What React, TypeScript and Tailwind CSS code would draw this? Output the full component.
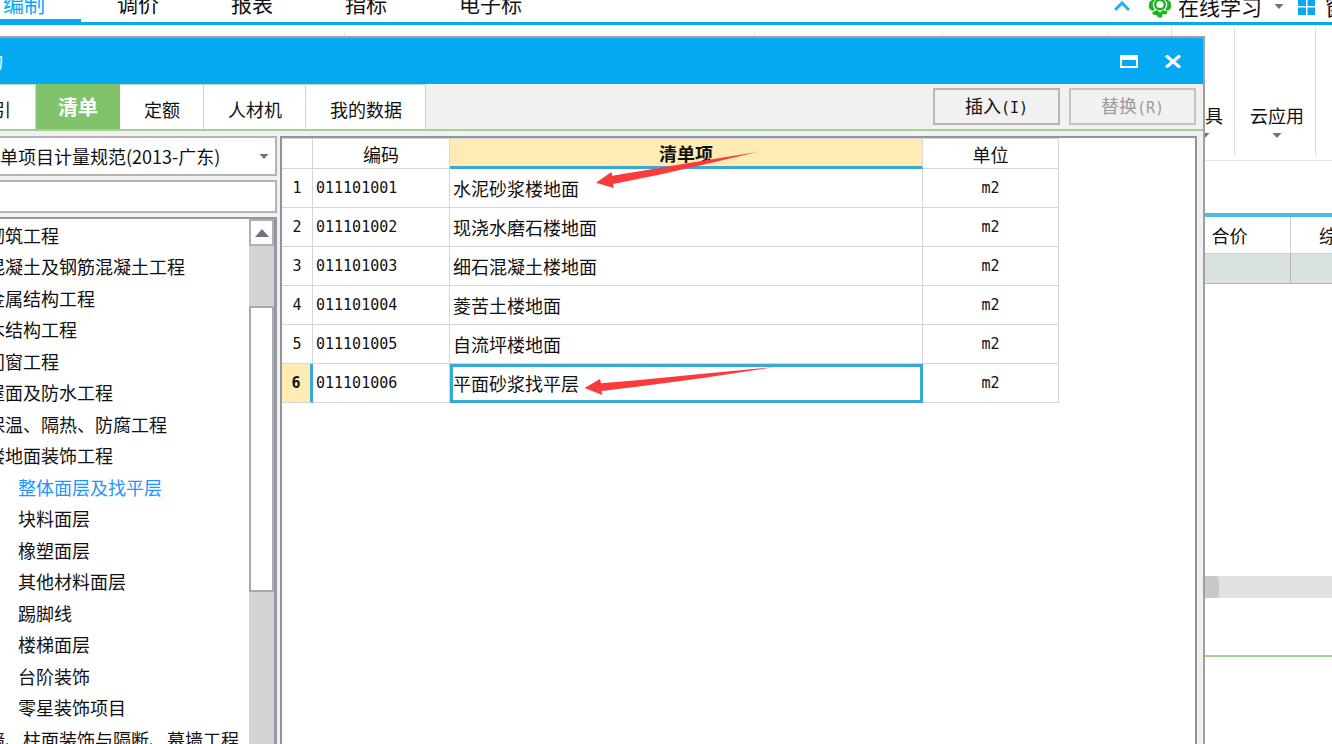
import React from "react";

const menuTabs = ["编制", "调价", "报表", "指标", "电子标"];

const libraryTabs = ["索引", "清单", "定额", "人材机", "我的数据"];

const chapters = [
  { name: "砌筑工程" },
  { name: "混凝土及钢筋混凝土工程" },
  { name: "金属结构工程" },
  { name: "木结构工程" },
  { name: "门窗工程" },
  { name: "屋面及防水工程" },
  { name: "保温、隔热、防腐工程" },
  { name: "楼地面装饰工程" },
  { name: "整体面层及找平层", child: true, active: true },
  { name: "块料面层", child: true },
  { name: "橡塑面层", child: true },
  { name: "其他材料面层", child: true },
  { name: "踢脚线", child: true },
  { name: "楼梯面层", child: true },
  { name: "台阶装饰", child: true },
  { name: "零星装饰项目", child: true },
  { name: "墙、柱面装饰与隔断、幕墙工程" },
];

const items = [
  { code: "011101001", name: "水泥砂浆楼地面", unit: "m2" },
  { code: "011101002", name: "现浇水磨石楼地面", unit: "m2" },
  { code: "011101003", name: "细石混凝土楼地面", unit: "m2" },
  { code: "011101004", name: "菱苦土楼地面", unit: "m2" },
  { code: "011101005", name: "自流坪楼地面", unit: "m2" },
  { code: "011101006", name: "平面砂浆找平层", unit: "m2" },
];

const CaretDown = () => (
  <svg width="10" height="5" viewBox="0 0 10 5" className="shrink-0" aria-hidden="true">
    <path d="M0.5 0H9.5L5 5Z" fill="#6f7283" />
  </svg>
);

const TopMenu = () => (
  <header className="flex h-[25px] items-end overflow-hidden border-b-[3px] border-[#04a9f1] text-[21px] leading-6">
    <nav className="flex h-9 shrink-0">
      {menuTabs.map((tab, i) => (
        <button
          key={tab}
          className={
            i === 0
              ? "border-b-[3px] border-[#04a9f1] pl-[3px] pr-9 text-[#04a9f1]"
              : "ml-9 border-b-[3px] border-transparent pr-9"
          }
        >
          {tab}
        </button>
      ))}
    </nav>
    <div className="ml-auto flex h-8 w-[218px] shrink-0 items-center overflow-hidden">
      <svg width="16" height="10" viewBox="0 0 16 10" className="shrink-0" aria-hidden="true">
        <path d="M1 9L8 2L15 9" fill="none" stroke="#23b0f5" strokeWidth="3" />
      </svg>
      {/* Headset badge */}
      <svg width="24" height="24" viewBox="0 0 24 24" className="ml-[18px] shrink-0" aria-hidden="true">
        <path d="M4 8A9 9 0 0 1 20 8" fill="none" stroke="#1eb31e" strokeWidth="2.5" />
        <path d="M2 7Q-0.5 12 2 15.5L5 17L6.5 15Q3.5 11 5.5 7Z" fill="#1eb31e" />
        <path d="M22 7Q24.5 12 22 15.5L19 17L17.5 15Q20.5 11 18.5 7Z" fill="#1eb31e" />
        <circle cx="12" cy="10.5" r="4.8" fill="none" stroke="#1eb31e" strokeWidth="2.4" />
        <path d="M4 19Q6 16.5 9 16L12 18.5L15 16L19.5 17.5L18.5 20.5L14.5 20L14 23.5H10L9 21.5L5 20.5Z" fill="#1eb31e" />
      </svg>
      <button className="ml-[6px] flex shrink-0 items-center gap-3">
        在线学习
        <CaretDown />
      </button>
      <button className="ml-[14px] flex shrink-0 items-center gap-[10px]">
        <svg width="17" height="17" viewBox="0 0 17 17" aria-hidden="true">
          <path d="M0 0H8V8H0ZM9.5 0H17V8H9.5ZM0 9.5H8V17H0ZM9.5 9.5H17V17H9.5Z" fill="#04a9f1" />
        </svg>
        窗口
      </button>
    </div>
  </header>
);

const Ribbon = () => (
  <div className="flex h-[136px] justify-end border-b border-[#e3e3e3] pb-[5px] pt-[3px]">
    <div className="mt-[5px] w-[345px] shrink-0 border-r border-[#dcdcdc]"></div>
    <div className="mt-[5px] grow border-r border-[#dcdcdc]"></div>
    <div className="mt-[5px] w-[188px] shrink-0 border-r border-[#dcdcdc]"></div>
    <div className="mt-[5px] w-[166px] shrink-0 border-r border-[#dcdcdc]"></div>
    <div className="w-[63px] shrink-0 border-r border-[#dcdcdc]"></div>
    <button className="flex w-[63px] shrink-0 flex-col items-center gap-[6px] border-r border-[#dcdcdc] pl-1 pt-[75px] leading-6">
      工具
      <CaretDown />
    </button>
    <button className="flex w-[81px] shrink-0 flex-col items-center gap-[6px] border-r border-[#dcdcdc] pl-1 pt-[75px] leading-6">
      云应用
      <CaretDown />
    </button>
    <div className="w-4 shrink-0"></div>
  </div>
);

const PriceSheet = () => (
  <section className="mt-[52px] flex h-[385px] flex-col justify-between border-t-4 border-[#4dbce9]">
    <table className="ml-auto w-[163px] table-fixed border-separate border-spacing-0">
      <thead>
        <tr className="h-[37px]">
          <th className="w-[122px] border-b border-r border-[#cfcfcf] font-normal">合价</th>
          <th className="overflow-hidden whitespace-nowrap border-b border-[#cfcfcf] pl-7 text-left font-normal">
            综合
          </th>
        </tr>
      </thead>
      <tbody>
        <tr className="h-[30px] bg-[#d9e2dd]">
          <td className="border-b border-r border-[#b2b7b4]"></td>
          <td className="border-b border-[#b2b7b4]"></td>
        </tr>
      </tbody>
    </table>
    <div className="flex h-[22px] justify-end bg-[#e1e1e1]">
      <div className="mr-[113px] w-[400px] rounded-sm bg-[#c8c8c8]"></div>
    </div>
  </section>
);

const TitleBar = () => (
  <div className="flex h-[46px] shrink-0 items-center justify-between bg-[#04a9f1] text-white">
    <h1 className="flex w-[3px] justify-end overflow-hidden whitespace-nowrap">查询</h1>
    <div className="flex items-center gap-[26px] pr-[21px]">
      <button aria-label="最大化">
        <svg width="18" height="13" viewBox="0 0 18 13" aria-hidden="true">
          <path d="M0 0H18V13H0ZM2 5V11H16V5Z" fill="#fff" fillRule="evenodd" />
        </svg>
      </button>
      <button aria-label="关闭">
        <svg width="18" height="13" viewBox="0 0 18 13" aria-hidden="true">
          <path d="M2 0.5L16 12.5M16 0.5L2 12.5" stroke="#fff" strokeWidth="3.2" />
        </svg>
      </button>
    </div>
  </div>
);

const Toolbar = () => (
  <div className="flex h-[47px] shrink-0 items-stretch justify-between border-b-2 border-[#a3d194] bg-[#f1f1f1]">
    <div className="flex">
      {libraryTabs.map((tab, i) => (
        <button
          key={tab}
          className={
            tab === "清单"
              ? "w-[84px] bg-[#80c36b] text-xl font-bold text-white"
              : i === 0
                ? "flex w-9 items-center justify-end overflow-hidden whitespace-nowrap border-r border-t border-[#b9e3ab] bg-white pr-6 pt-1"
                : "border-r border-t border-[#b9e3ab] bg-white pl-6 pr-[23px] pt-1"
          }
        >
          {tab}
        </button>
      ))}
    </div>
    <div className="flex gap-[9px] pb-1 pr-[7px] pt-1">
      <button className="w-[127px] border-2 border-[#b6b6b6]">
        插入<span className="font-['DejaVu_Sans_Mono',monospace] text-[15px]">(I)</span>
      </button>
      <button className="w-[127px] border-2 border-[#c4c4c4] text-[#9a9a9a]" disabled>
        替换<span className="font-['DejaVu_Sans_Mono',monospace] text-[15px]">(R)</span>
      </button>
    </div>
  </div>
);

const ChapterPanel = () => (
  <aside className="flex w-[277px] shrink-0 flex-col gap-1">
    <div className="relative h-10 shrink-0 overflow-hidden border-2 border-l-0 border-[#b3b3b3] bg-white">
      <select
        aria-label="规范"
        className="-ml-[72px] h-full w-[340px] appearance-none bg-white outline-none"
        defaultValue="2013-广东"
      >
        <option value="2013-广东">工程量清单项目计量规范(2013-广东)</option>
      </select>
      <div className="pointer-events-none absolute inset-y-0 right-[6px] flex items-center">
        <CaretDown />
      </div>
    </div>
    <input
      aria-label="搜索"
      className="h-[33px] shrink-0 border-2 border-l-0 border-[#b3b3b3] bg-white px-1 outline-none"
    />
    <div className="flex min-h-0 grow border-r-[3px] border-t-2 border-[#9598a3] bg-white">
      <ul className="min-w-0 grow overflow-hidden whitespace-nowrap">
        {chapters.map((chapter) => (
          <li
            key={chapter.name}
            className={
              chapter.child
                ? "flex items-center pl-[18px] odd:h-[31px] even:h-8"
                : "-ml-[13px] flex items-center odd:h-[31px] even:h-8"
            }
          >
            <a href="#" className={chapter.active ? "text-[#1e96ff]" : ""}>
              {chapter.name}
            </a>
          </li>
        ))}
      </ul>
      {/* Scroll bar */}
      <div className="flex w-[25px] shrink-0 flex-col bg-[#d3d3d3]">
        <button
          aria-label="向上滚动"
          className="flex h-[27px] shrink-0 items-center justify-center border-2 border-[#b0b0b0] bg-white"
        >
          <svg width="14" height="8" viewBox="0 0 14 8" aria-hidden="true">
            <path d="M0 8L7 0L14 8Z" fill="#6f7283" />
          </svg>
        </button>
        <div className="mt-[60px] h-[286px] shrink-0 border-2 border-[#a9a9a9] bg-white"></div>
      </div>
    </div>
  </aside>
);

const ItemTable = () => (
  <div className="relative min-w-0 grow overflow-hidden border-2 border-b-0 border-[#90949e] bg-white">
    <table className="w-[777px] table-fixed border-separate border-spacing-0">
      <thead>
        <tr className="h-[31px]">
          <th className="w-[31px] border-b border-r border-t border-[#d6d6d6]"></th>
          <th className="w-[137px] border-b border-r border-t border-[#d6d6d6] font-normal">编码</th>
          <th className="w-[473px] border-b-[3px] border-r border-t border-[#d6d6d6] border-b-[#38a9d6] bg-[#ffebb3] font-bold">
            清单项
          </th>
          <th className="border-b border-r border-t border-[#d6d6d6] font-normal">单位</th>
        </tr>
      </thead>
      <tbody>
        {items.map((item, i) => {
          const selected = i === items.length - 1;
          return (
            <tr key={item.code} className="h-[39px]">
              <th
                className={
                  selected
                    ? "border-b border-r-[3px] border-[#d6d6d6] border-r-[#38a9d6] bg-[#ffebb3] font-['DejaVu_Sans_Mono',monospace] text-[15px] font-bold"
                    : "border-b border-r border-[#d6d6d6] font-['DejaVu_Sans_Mono',monospace] text-[15px] font-normal"
                }
              >
                {i + 1}
              </th>
              <td className="border-b border-r border-[#d6d6d6] pl-[3px] font-['DejaVu_Sans_Mono',monospace] text-[15px]">
                {item.code}
              </td>
              <td
                className={
                  selected
                    ? "border-b border-r border-[#d6d6d6] pl-[3px] outline-[3px] -outline-offset-3 outline-[#38a9d6]"
                    : "border-b border-r border-[#d6d6d6] pl-[3px]"
                }
              >
                {item.name}
              </td>
              <td className="border-b border-r border-[#d6d6d6] text-center font-['DejaVu_Sans_Mono',monospace] text-[15px]">
                {item.unit}
              </td>
            </tr>
          );
        })}
      </tbody>
    </table>

    {/* Marker arrows drawn over the rows */}
    <svg
      width="777"
      height="265"
      viewBox="282 138 777 265"
      className="pointer-events-none absolute left-0 top-0"
      aria-hidden="true"
    >
      <path
        d="M596 182.7L611.3 172L612.3 175.8L683 164L757 152L715 162L660 174.5L613 184L613.8 188Z"
        fill="#fb3b3b"
      />
      <path
        d="M584.5 388L600 379L601 383.2L637 380.3L703 373.8L776 367L703 378L637 386.7L601.5 391L602.3 395Z"
        fill="#fb3b3b"
      />
    </svg>
  </div>
);

const App = () => {
  return (
    <div className="relative h-screen overflow-hidden bg-white font-['Noto_Sans_CJK_SC',sans-serif] text-lg leading-6 text-[#111]">
      <TopMenu />
      <Ribbon />
      <PriceSheet />
      <div className="mt-[57px] border-t-2 border-[#a3d194]"></div>

      {/* Query window on top of the workspace */}
      <div
        role="dialog"
        className="absolute bottom-0 left-0 right-[127px] top-9 flex flex-col border-r-2 border-t-2 border-[#a0a0a0] bg-[#f1f1f1]"
      >
        <TitleBar />
        <Toolbar />
        <div className="flex min-h-0 grow gap-[3px] pr-[6px] pt-[5px]">
          <ChapterPanel />
          <ItemTable />
        </div>
      </div>
    </div>
  );
};

export default App;
